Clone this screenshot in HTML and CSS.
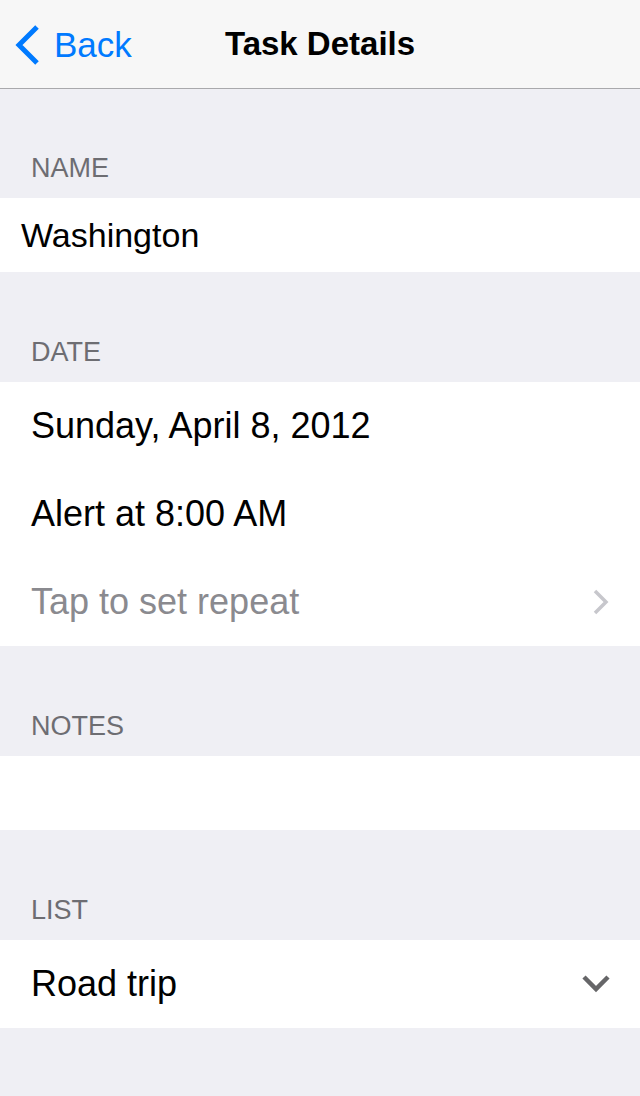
FILE: index.html
```html
<!DOCTYPE html>
<html>
<head>
<meta charset="utf-8">
<link rel="stylesheet" href="styles.css">
</head>
<body>
<header class="navbar">
  <div class="back">
    <svg class="back-icon" width="28" height="40" viewBox="0 0 28 40"><path d="M24 2 L6 20 L24 38" fill="none" stroke="#007aff" stroke-width="5"/></svg>
    <span class="back-text">Back</span>
  </div>
  <div class="title">Task Details</div>
</header>
<main class="content">
  <div class="section-header first">NAME</div>
  <div class="group">
    <div class="row short name">Washington</div>
  </div>
  <div class="section-header">DATE</div>
  <div class="group">
    <div class="row">Sunday, April 8, 2012</div>
    <div class="row">Alert at 8:00 AM</div>
    <div class="row placeholder">
      <span>Tap to set repeat</span>
      <svg class="chev-right" width="18" height="26" viewBox="0 0 18 26"><path d="M3 2 L14 13 L3 24" fill="none" stroke="#c7c7cc" stroke-width="3.5"/></svg>
    </div>
  </div>
  <div class="section-header">NOTES</div>
  <div class="group">
    <div class="row short"></div>
  </div>
  <div class="section-header">LIST</div>
  <div class="group">
    <div class="row">
      <span>Road trip</span>
      <svg class="chev-down" width="28" height="20" viewBox="0 0 28 20"><path d="M2 3 L14 15 L26 3" fill="none" stroke="#666668" stroke-width="4.5"/></svg>
    </div>
  </div>
</main>
</body>
</html>
```
FILE: styles.css
```css
* { box-sizing: border-box; }
html, body {
  margin: 0;
  padding: 0;
  background: #efeff4;
  font-family: "Liberation Sans", Arial, sans-serif;
  width: 640px;
  height: 1096px;
  overflow: hidden;
}
.navbar {
  position: relative;
  height: 89px;
  background: #f7f7f7;
  border-bottom: 1px solid #a9a9ac;
  display: flex;
  align-items: center;
  justify-content: center;
}
.back {
  position: absolute;
  left: 13px;
  top: 24px;
  display: flex;
  align-items: center;
  gap: 13px;
}
.back-icon { display: block; }
.back-text {
  color: #007aff;
  font-size: 35px;
  line-height: 40px;
  margin-top: 1px;
}
.title {
  font-size: 33px;
  font-weight: bold;
  color: #000;
  padding-left: 0;
}
.section-header {
  height: 110px;
  display: flex;
  align-items: flex-end;
  padding: 0 0 16px 31px;
  font-size: 27px;
  line-height: 27px;
  color: #6d6d72;
}
.section-header.first { height: 109px; }
.group { background: #fff; }
.row {
  height: 88px;
  display: flex;
  align-items: center;
  justify-content: space-between;
  padding: 0 30px 0 31px;
  font-size: 36px;
  color: #000;
}
.row.short { height: 74px; }
.row.name { padding-left: 21px; font-size: 34px; }
.row.placeholder { color: #8a8a8f; }
.chev-down { margin-right: 0; }
```
